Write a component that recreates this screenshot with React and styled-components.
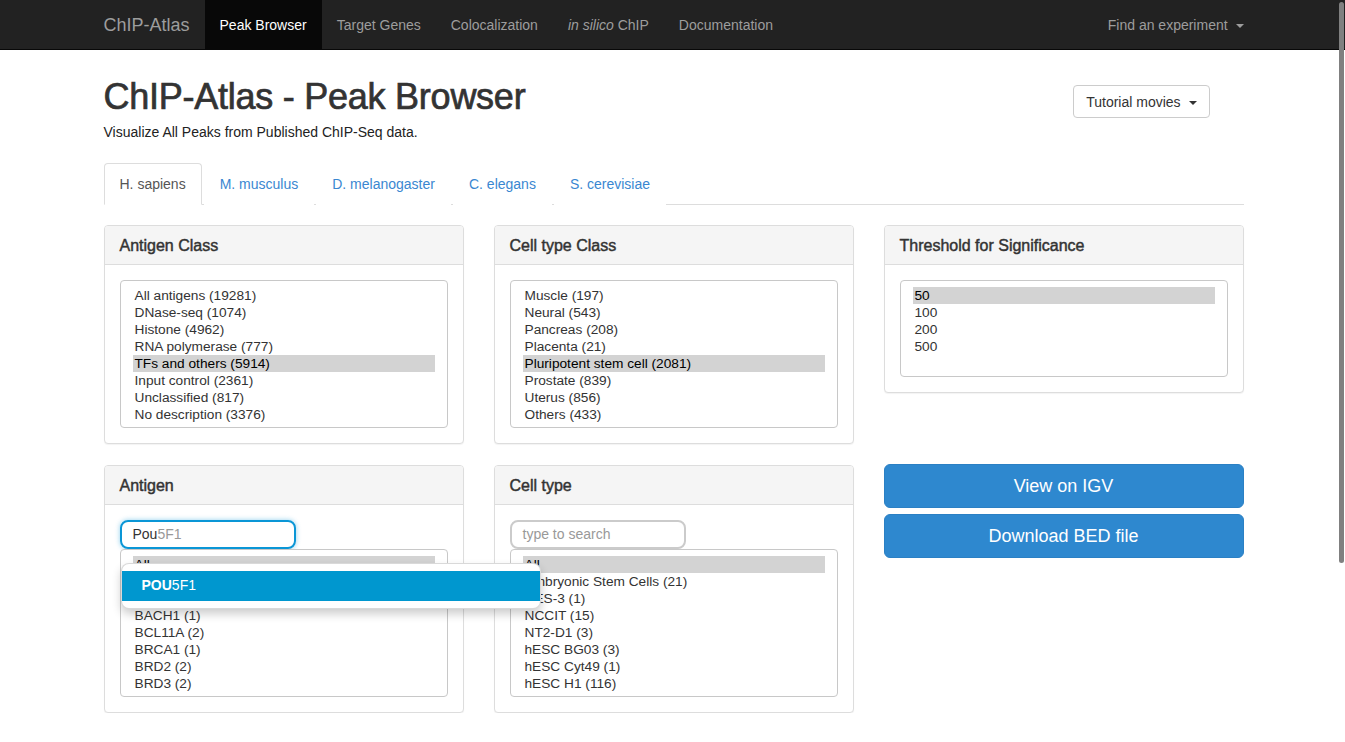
import React from 'react';
import styled, { createGlobalStyle } from 'styled-components';

const GlobalStyle = createGlobalStyle`
    html, body {
        margin: 0;
        padding: 0;
        background: #fff;
    }
    body {
        font-family: "Liberation Sans", Arial, sans-serif;
        font-size: 14px;
        line-height: 1.42857;
        color: #333;
        overflow: hidden;
    }
    * {
        box-sizing: border-box;
    }
`;

const Container = styled.div`
    width: 1170px;
    margin: 0 auto;
    padding: 0 14px 0 16px;
`;

const Navbar = styled.nav`
    height: 50px;
    background: #222;
    border-bottom: 1px solid #080808;

    ${Container} {
        display: flex;
        align-items: stretch;
        height: 50px;
    }
`;

const Brand = styled.a`
    margin-left: -15px;
    padding: 15px;
    font-size: 18px;
    line-height: 20px;
    color: #9d9d9d;
    text-decoration: none;
`;

const NavLink = styled.a`
    padding: 15px;
    font-size: 14px;
    line-height: 20px;
    color: ${p => (p.$active ? '#fff' : '#9d9d9d')};
    background: ${p => (p.$active ? '#080808' : 'transparent')};
    text-decoration: none;
    white-space: nowrap;

    em {
        font-style: italic;
    }
`;

const NavRight = styled.div`
    margin-left: auto;
    margin-right: -15px;
    display: flex;
`;

const Caret = styled.span`
    display: inline-block;
    width: 0;
    height: 0;
    margin-left: 4px;
    vertical-align: middle;
    border-top: 4px solid ${p => p.$color || 'currentColor'};
    border-left: 4px solid transparent;
    border-right: 4px solid transparent;
`;

const Header = styled.header`
    display: flex;
    justify-content: space-between;
    align-items: flex-start;
`;

const Title = styled.h1`
    margin: 27px 0 6px;
    font-size: 36px;
    line-height: 1.1;
    font-weight: normal;
    color: #333;
    letter-spacing: -0.25px;
    -webkit-text-stroke: 0.7px #333;
`;

const Lead = styled.p`
    margin: 0 0 10px;
    font-size: 14px;
    line-height: 18px;
    color: #222;
`;

const TutorialButton = styled.button`
    margin: 35px 34px 0 0;
    padding: 6px 12px;
    height: 33px;
    font-family: inherit;
    font-size: 14px;
    line-height: 20px;
    color: #333;
    background: #fff;
    border: 1px solid #ccc;
    border-radius: 4px;
`;

const Tabs = styled.ul`
    display: flex;
    list-style: none;
    margin: 12px 0 0;
    padding: 0;
    border-bottom: 1px solid #ddd;
`;

const Tab = styled.li`
    margin-right: 2px;
    margin-bottom: -1px;

    a {
        display: block;
        padding: 10px 15px;
        line-height: 20px;
        font-size: 14px;
        text-decoration: none;
        border: 1px solid ${p => (p.$active ? '#ddd' : 'transparent')};
        border-bottom-color: ${p => (p.$active ? '#fff' : 'transparent')};
        border-radius: 4px 4px 0 0;
        background: #fff;
        color: ${p => (p.$active ? '#555' : '#3a87d1')};
    }
`;

const Grid = styled.div`
    display: grid;
    grid-template-columns: repeat(3, 360px);
    column-gap: 30px;
    row-gap: 21px;
    align-items: start;
    margin-top: 20px;
`;

const Panel = styled.section`
    background: #fff;
    border: 1px solid #ddd;
    border-radius: 4px;
    box-shadow: 0 1px 1px rgba(0, 0, 0, 0.05);
`;

const PanelHeading = styled.div`
    padding: 11px 15px 9px;
    background: #f5f5f5;
    border-bottom: 1px solid #ddd;
    border-radius: 3px 3px 0 0;
    font-size: 16px;
    line-height: 18px;
    font-weight: normal;
    color: #333;
    -webkit-text-stroke: 0.45px #333;
`;

const PanelBody = styled.div`
    padding: 15px;
`;

const ListBox = styled.div`
    height: ${p => p.$height}px;
    padding: 6px 12px;
    border: 1px solid #c8c8c8;
    border-radius: 4px;
    overflow: hidden;
    background: #fff;
`;

const Option = styled.div`
    height: 17px;
    padding: 0 2px;
    font-size: 13.7px;
    line-height: 17px;
    white-space: nowrap;
    color: ${p => (p.$selected ? '#000' : '#333')};
    background: ${p => (p.$selected ? '#d3d3d3' : 'transparent')};
`;

const SearchWrap = styled.div`
    position: relative;
`;

const SearchInput = styled.div`
    width: 176px;
    height: 29px;
    padding: 0 11px;
    border: 2px solid ${p => (p.$focused ? '#0a96d6' : '#cbcbcb')};
    border-radius: 8px;
    font-size: 14px;
    line-height: 25px;
    color: #333;
    box-shadow: ${p => (p.$focused ? '0 0 5px rgba(10, 150, 214, 0.45)' : 'none')};

    .hint {
        color: #999;
    }
`;

const Placeholder = styled.span`
    color: #999;
`;

const Suggestions = styled.div`
    position: absolute;
    top: 43px;
    left: 1px;
    z-index: 10;
    width: 420px;
    padding: 7px 0;
    background: #fff;
    border: 1px solid rgba(0, 0, 0, 0.15);
    border-radius: 8px;
    box-shadow: 0 5px 10px rgba(0, 0, 0, 0.2);
`;

const Suggestion = styled.div`
    height: 30px;
    padding: 0 20px;
    font-size: 14px;
    line-height: 29px;
    color: #fff;
    background: ${p => (p.$active ? '#0097cf' : 'transparent')};

    strong {
        font-weight: bold;
    }
`;

const ActionStack = styled.div`
    display: flex;
    flex-direction: column;
    gap: 6px;
    margin-top: -1px;
`;

const PrimaryButton = styled.button`
    height: 44px;
    padding: 10px 16px;
    font-family: inherit;
    font-size: 18px;
    line-height: 22px;
    color: #fff;
    background: #2e88cf;
    border: 1px solid #2b80c4;
    border-radius: 6px;
`;

const ScrollThumb = styled.div`
    position: fixed;
    top: 2px;
    right: 1px;
    width: 5px;
    height: 561px;
    background: #808080;
    border-radius: 3px;
`;

const navItems = ['Peak Browser', 'Target Genes', 'Colocalization', 'silico', 'Documentation'];
const species = ['H. sapiens', 'M. musculus', 'D. melanogaster', 'C. elegans', 'S. cerevisiae'];

const antigenClasses = [
    'All antigens (19281)', 'DNase-seq (1074)', 'Histone (4962)', 'RNA polymerase (777)',
    'TFs and others (5914)', 'Input control (2361)', 'Unclassified (817)', 'No description (3376)',
];
const cellClasses = [
    'Muscle (197)', 'Neural (543)', 'Pancreas (208)', 'Placenta (21)',
    'Pluripotent stem cell (2081)', 'Prostate (839)', 'Uterus (856)', 'Others (433)',
];
const thresholds = ['50', '100', '200', '500'];
const antigens = ['All', 'ARID3A (1)', 'ATF2 (1)', 'BACH1 (1)', 'BCL11A (2)', 'BRCA1 (1)', 'BRD2 (2)', 'BRD3 (2)'];
const cellTypes = [
    'All', 'Embryonic Stem Cells (21)', 'HES-3 (1)', 'NCCIT (15)', 'NT2-D1 (3)',
    'hESC BG03 (3)', 'hESC Cyt49 (1)', 'hESC H1 (116)',
];

const List = ({ items, selected, height }) => (
    <ListBox $height={height}>
        {items.map((item, idx) =>
            <Option key={idx} $selected={idx === selected}>{item}</Option>
        )}
    </ListBox>
);

const App = () => {
    return (
        <>
            <GlobalStyle />
            <Navbar>
                <Container>
                    <Brand>ChIP-Atlas</Brand>
                    {navItems.map((item, idx) =>
                        <NavLink key={item} $active={idx === 0}>
                            {item === 'silico' ? <><em>in silico</em> ChIP</> : item}
                        </NavLink>
                    )}
                    <NavRight>
                        <NavLink>Find an experiment <Caret /></NavLink>
                    </NavRight>
                </Container>
            </Navbar>

            <Container>
                <Header>
                    <div>
                        <Title>ChIP-Atlas - Peak Browser</Title>
                        <Lead>Visualize All Peaks from Published ChIP-Seq data.</Lead>
                    </div>
                    <TutorialButton>Tutorial movies <Caret $color="#333" /></TutorialButton>
                </Header>

                <Tabs>
                    {species.map((name, idx) =>
                        <Tab key={name} $active={idx === 0}><a>{name}</a></Tab>
                    )}
                </Tabs>

                <Grid>
                    <Panel>
                        <PanelHeading>Antigen Class</PanelHeading>
                        <PanelBody>
                            <List items={antigenClasses} selected={4} height={148} />
                        </PanelBody>
                    </Panel>
                    <Panel>
                        <PanelHeading>Cell type Class</PanelHeading>
                        <PanelBody>
                            <List items={cellClasses} selected={4} height={148} />
                        </PanelBody>
                    </Panel>
                    <Panel>
                        <PanelHeading>Threshold for Significance</PanelHeading>
                        <PanelBody>
                            <List items={thresholds} selected={0} height={97} />
                        </PanelBody>
                    </Panel>

                    <Panel>
                        <PanelHeading>Antigen</PanelHeading>
                        <PanelBody>
                            <SearchWrap>
                                <SearchInput $focused>Pou<span className="hint">5F1</span></SearchInput>
                                <List items={antigens} selected={0} height={148} />
                                <Suggestions>
                                    <Suggestion $active><strong>POU</strong>5F1</Suggestion>
                                </Suggestions>
                            </SearchWrap>
                        </PanelBody>
                    </Panel>
                    <Panel>
                        <PanelHeading>Cell type</PanelHeading>
                        <PanelBody>
                            <SearchWrap>
                                <SearchInput><Placeholder>type to search</Placeholder></SearchInput>
                                <List items={cellTypes} selected={0} height={148} />
                            </SearchWrap>
                        </PanelBody>
                    </Panel>
                    <ActionStack>
                        <PrimaryButton>View on IGV</PrimaryButton>
                        <PrimaryButton>Download BED file</PrimaryButton>
                    </ActionStack>
                </Grid>
            </Container>
            <ScrollThumb />
        </>
    );
};

export default App;
